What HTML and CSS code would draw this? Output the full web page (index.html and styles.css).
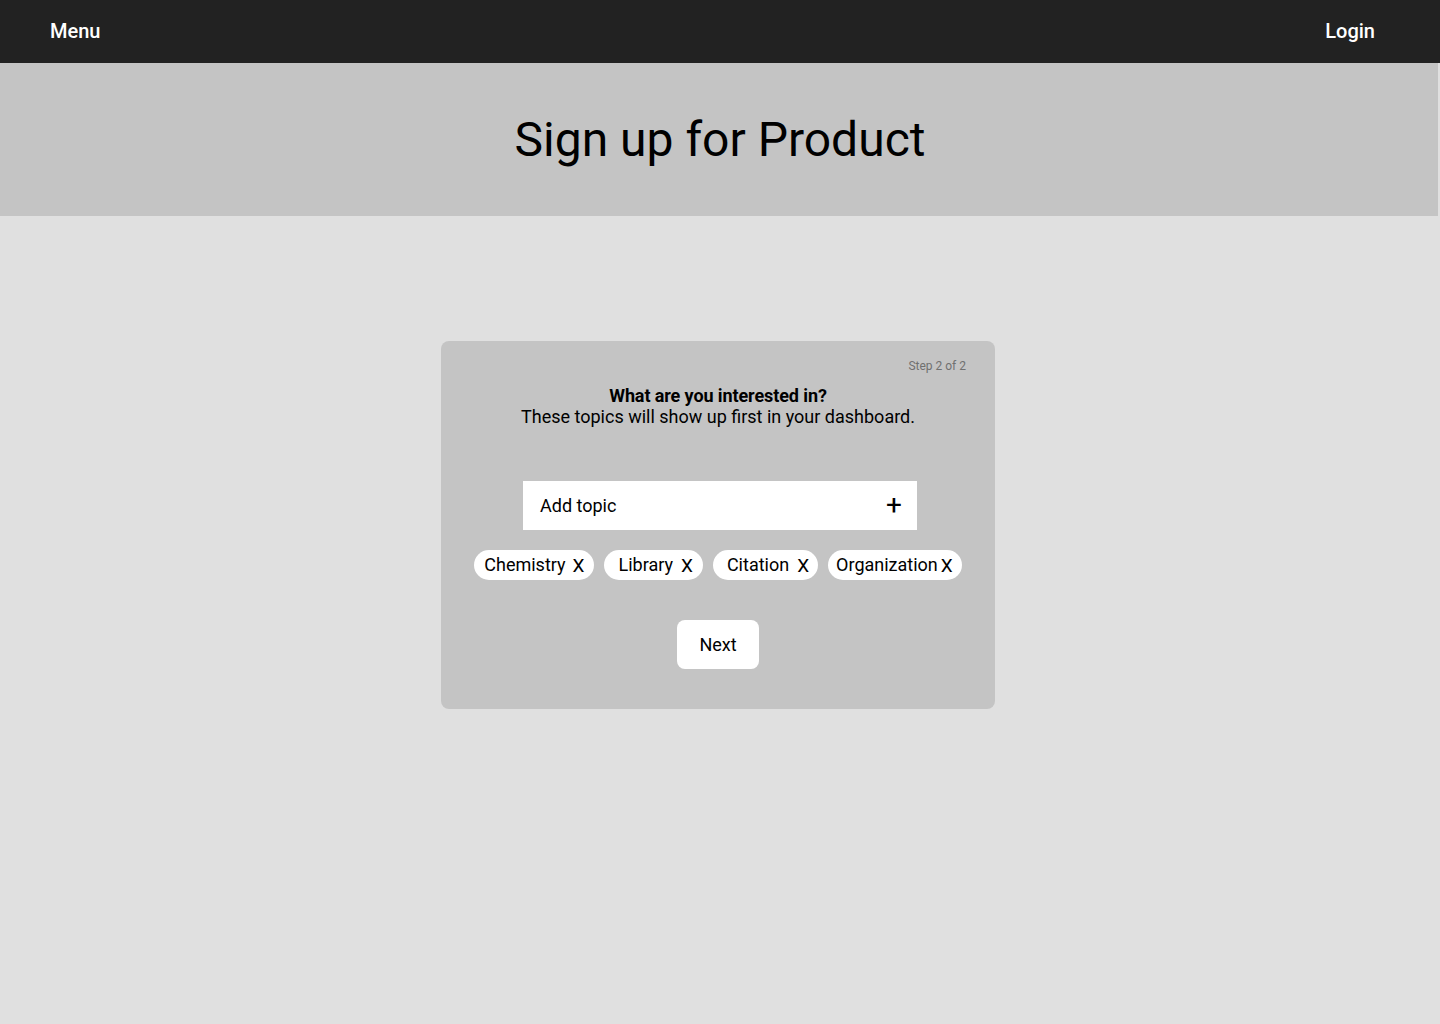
FILE: index.html
```html
<!DOCTYPE html>
<html>
<head>
<meta charset="utf-8">
<link rel="stylesheet" href="styles.css">
</head>
<body>
<nav class="topbar">
  <span class="nav-link">Menu</span>
  <span class="nav-link">Login</span>
</nav>
<header class="hero">
  <h1 class="hero-title">Sign up for Product</h1>
</header>
<main class="main">
  <section class="card">
    <div class="step">Step 2 of 2</div>
    <div class="heading">
      <div class="question">What are you interested in?</div>
      <div class="subtitle">These topics will show up first in your dashboard.</div>
    </div>
    <div class="topic-input">
      <span class="placeholder">Add topic</span>
      <span class="plus">+</span>
    </div>
    <div class="tags">
      <span class="tag tag-chem"><span class="label">Chemistry</span><span class="x">X</span></span>
      <span class="tag tag-lib"><span class="label">Library</span><span class="x">X</span></span>
      <span class="tag tag-cit"><span class="label">Citation</span><span class="x">X</span></span>
      <span class="tag tag-org"><span class="label">Organization</span><span class="x">X</span></span>
    </div>
    <button class="next">Next</button>
  </section>
</main>
</body>
</html>
```
FILE: styles.css
```css
html, body {
  margin: 0;
  padding: 0;
}
body {
  font-family: Roboto, "Liberation Sans", sans-serif;
  background: #e0e0e0;
  color: #000;
  min-height: 1024px;
}
.topbar {
  height: 63px;
  background: #222222;
  display: flex;
  align-items: center;
  justify-content: space-between;
  padding: 0 65px 0 50px;
  box-sizing: border-box;
}
.nav-link {
  color: #fff;
  font-size: 20px;
  font-weight: 500;
  line-height: 20px;
  padding-bottom: 2px;
}
.hero {
  height: 153px;
  background: #c4c4c4;
  width: 1438px;
  display: flex;
  align-items: center;
  justify-content: center;
}
.hero-title {
  margin: 0;
  font-size: 48px;
  font-weight: 400;
  padding-left: 2px;
}
.main {
  display: flex;
  justify-content: center;
  padding-top: 125px;
  padding-right: 4px;
}
.card {
  width: 554px;
  height: 368px;
  box-sizing: border-box;
  background: #c4c4c4;
  border-radius: 8px;
  padding: 17px 29px 0 29px;
  display: flex;
  flex-direction: column;
  align-items: center;
}
.step {
  align-self: flex-end;
  font-size: 12px;
  color: #707070;
  line-height: 16px;
}
.heading {
  margin-top: 12px;
  text-align: center;
}
.question {
  font-size: 18px;
  font-weight: 700;
  line-height: 20px;
  letter-spacing: -0.1px;
}
.subtitle {
  font-size: 18px;
  line-height: 22px;
}
.topic-input {
  margin-top: 53px;
  margin-left: 4px;
  width: 394px;
  height: 49px;
  box-sizing: border-box;
  background: #fff;
  display: flex;
  align-items: center;
  justify-content: space-between;
  padding: 0 15px 0 17px;
  font-size: 18px;
}
.plus {
  font-size: 28px;
  font-weight: 400;
  line-height: 1;
  padding-bottom: 2px;
}
.tags {
  margin-top: 20px;
  display: flex;
  gap: 10px;
}
.tag {
  height: 30px;
  box-sizing: border-box;
  background: #fff;
  border-radius: 15px;
  display: flex;
  align-items: center;
  padding: 0 10px;
  font-size: 18px;
  white-space: nowrap;
}
.tag .label {
  padding-bottom: 2px;
}
.tag .x {
  font-size: 19px;
  padding-top: 1px;
}
.tag-chem { padding: 0 10px 0 10px; }
.tag-chem .x { margin-left: 7px; }
.tag-lib { padding: 0 10px 0 14px; }
.tag-lib .x { margin-left: 8px; }
.tag-cit { padding: 0 9px 0 14px; }
.tag-cit .x { margin-left: 8px; }
.tag-org { padding: 0 9px 0 8px; }
.tag-org .x { margin-left: 3px; }
.next {
  margin-top: 40px;
  width: 82px;
  height: 49px;
  background: #fff;
  border: none;
  border-radius: 8px;
  font-family: Roboto, "Liberation Sans", sans-serif;
  font-size: 18px;
  color: #000;
  padding: 0;
}
```
